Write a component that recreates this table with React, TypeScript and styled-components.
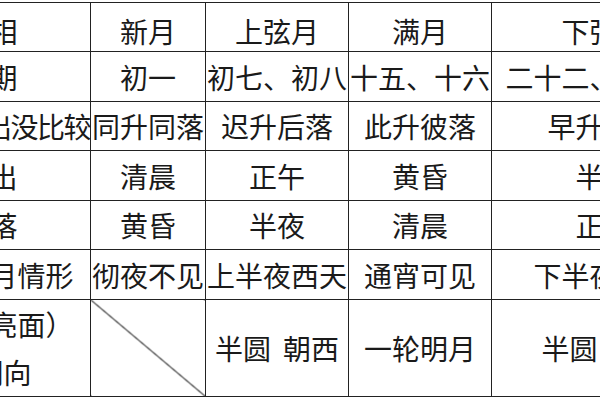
import React from "react";
import styled, { createGlobalStyle } from "styled-components";

const Global = createGlobalStyle`
  html, body {
    margin: 0;
    padding: 0;
    background: #ffffff;
    overflow: hidden;
  }
  body {
    width: 600px;
    height: 400px;
  }
`;

const Page = styled.div`
  width: 600px;
  height: 400px;
  overflow: hidden;
  background: #fff;
  padding-top: 2px;
  box-sizing: border-box;
`;

const Table = styled.table`
  border-collapse: collapse;
  table-layout: fixed;
  margin-left: -112px;
  width: 827px;
  font-family: "Noto Sans CJK SC", "Noto Sans", sans-serif;
  font-size: 28px;
  color: #1a1a1a;
`;

const Col = styled.col<{ $w: number }>`
  width: ${(p) => p.$w}px;
`;

const Row = styled.tr<{ $h: number; $head?: boolean }>`
  height: ${(p) => p.$h}px;
  & > td {
    padding-top: ${(p) => (p.$head ? "7px" : "0")};
  }
`;

const Cell = styled.td<{ $diag?: boolean; $tight?: boolean }>`
  border: 1.5px solid #222;
  padding: 0;
  text-align: ${(p) => (p.$tight ? "right" : "center")};
  vertical-align: middle;
  white-space: nowrap;
  line-height: 1;
  overflow: visible;
  letter-spacing: ${(p) => (p.$tight ? "-1.5px" : "0")};
  ${(p) =>
    p.$diag
      ? `background: linear-gradient(to bottom left, transparent calc(50% - 1px), #1e1e1e 50%, transparent calc(50% + 1px));`
      : ""}
`;

const Line = styled.div`
  line-height: 48px;
  white-space: nowrap;
`;

const Gap = styled.span`
  display: inline-block;
  width: 12px;
`;

const rows: string[][] = [
  ["月相", "新月", "上弦月", "满月", "下弦月"],
  ["日期", "初一", "初七、初八", "十五、十六", "二十二、二十三"],
  ["与太阳出没比较", "同升同落", "迟升后落", "此升彼落", "早升早落"],
  ["月出", "清晨", "正午", "黄昏", "半夜"],
  ["月落", "黄昏", "半夜", "清晨", "正午"],
  ["夜晚见月情形", "彻夜不见", "上半夜西天", "通宵可见", "下半夜东天"],
];

const heights = [49, 50, 49, 50, 49, 50];
const widths = [202, 115, 143, 143, 224];

export default function App() {
  return (
    <Page>
      <Global />
      <Table>
        <colgroup>
          {widths.map((w, i) => (
            <Col key={i} $w={w} />
          ))}
        </colgroup>
        <tbody>
          {rows.map((r, i) => (
            <Row key={i} $h={heights[i]} $head={i === 0}>
              {r.map((c, j) => (
                <Cell key={j} $tight={i === 2 && j === 0}>
                  {c}
                </Cell>
              ))}
            </Row>
          ))}
          <Row $h={95}>
            <Cell>
              <Line>月面（亮面）</Line>
              <Line>的朝向</Line>
            </Cell>
            <Cell $diag />
            <Cell>
              半圆<Gap />朝西
            </Cell>
            <Cell>一轮明月</Cell>
            <Cell>
              半圆<Gap />朝东
            </Cell>
          </Row>
        </tbody>
      </Table>
    </Page>
  );
}
